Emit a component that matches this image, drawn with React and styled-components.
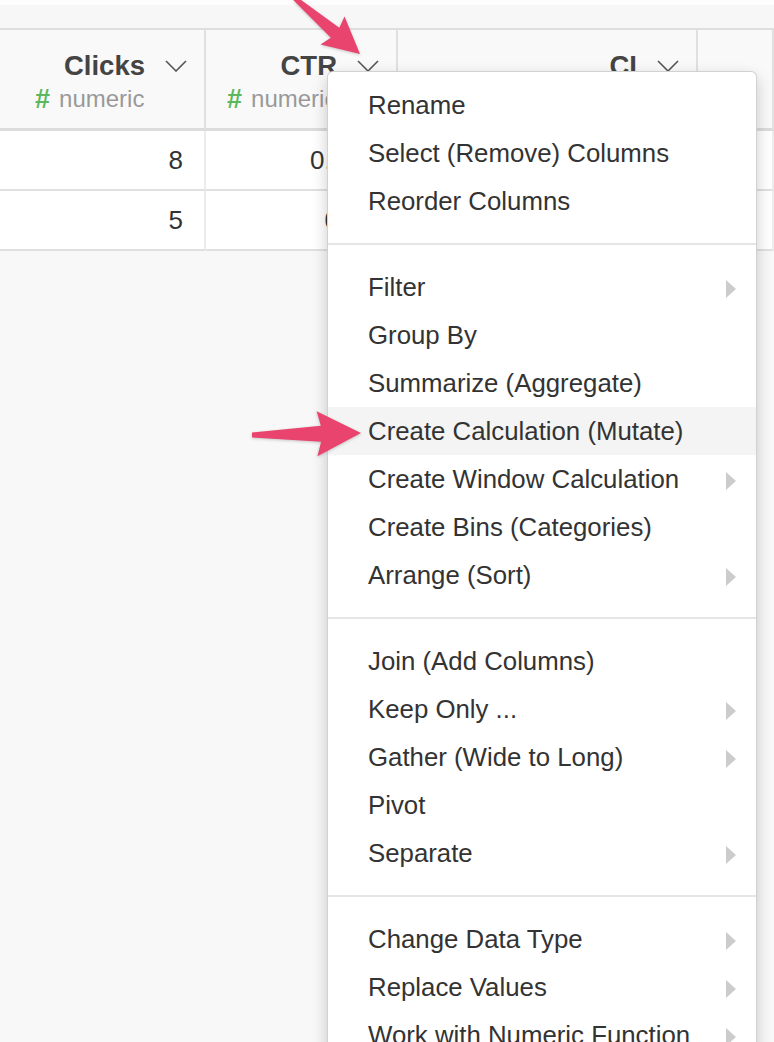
import React from "react";
import styled, { createGlobalStyle } from "styled-components";

const GlobalStyle = createGlobalStyle`
  html, body { margin: 0; padding: 0; background: #f8f8f8; }
  body { font-family: "Liberation Sans", Helvetica, Arial, sans-serif; color: #333; overflow: hidden; }
  * { box-sizing: border-box; }
`;

const Page = styled.div`
  position: relative;
  width: 774px;
  height: 1042px;
  overflow: hidden;
  background: #f8f8f8;
`;

const TopStrip = styled.div`
  height: 30px;
  background: linear-gradient(#fdfdfd 0 5px, #f7f7f7 5px);
  border-bottom: 2px solid #dedede;
`;

const Grid = styled.div`
  display: grid;
  grid-template-columns: 14px 192px 192px 300px 1fr;
`;

const HeadCell = styled.div`
  height: 101px;
  background: #f9f9f9;
  border-right: 2px solid #e0e0e0;
  border-bottom: 3px solid #dcdcdc;
  padding: 21px 17px 0 21px;
  display: flex;
  flex-direction: column;
`;

const TitleRow = styled.div`
  display: flex;
  justify-content: flex-end;
  align-items: center;
  gap: 20px;
  height: 30px;
`;

const Title = styled.span`
  font-size: 27.5px;
  font-weight: bold;
  color: #444;
  line-height: 30px;
  white-space: nowrap;
`;

const TypeRow = styled.div`
  margin-top: 4px;
  display: flex;
  align-items: center;
  height: 28px;
  white-space: nowrap;
  overflow: hidden;
`;

const Hash = styled.span`
  color: #5cb85c;
  font-weight: bold;
  font-size: 27px;
  margin-right: 9px;
`;

const TypeName = styled.span`
  color: #999;
  font-size: 24px;
`;

const DataCell = styled.div`
  height: 60px;
  background: #fff;
  border-right: 2px solid #ececec;
  border-bottom: 2px solid #e0e0e0;
  display: flex;
  align-items: center;
  justify-content: flex-end;
  padding-right: 21px;
  font-size: 26px;
  color: #333;
`;

const Menu = styled.div`
  position: absolute;
  left: 327px;
  top: 71px;
  width: 430px;
  background: #fff;
  border: 1px solid rgba(0, 0, 0, 0.18);
  border-radius: 6px;
  box-shadow: 0 6px 16px rgba(0, 0, 0, 0.2);
  padding-top: 9px;
  z-index: 2;
`;

const Item = styled.div`
  height: 48px;
  display: flex;
  align-items: center;
  justify-content: space-between;
  padding: 0 20px 0 40px;
  font-size: 25.8px;
  color: #333;
  white-space: nowrap;
  background: ${(p) => (p.$active ? "#f4f4f4" : "transparent")};
`;

const Caret = styled.span`
  width: 0;
  height: 0;
  border-left: 10px solid #cccccc;
  border-top: 9.5px solid transparent;
  border-bottom: 9.5px solid transparent;
  margin-top: 3px;
`;

const Divider = styled.div`
  height: 2px;
  background: #e5e5e5;
  margin: 18px 0;
`;

const Overlay = styled.svg`
  position: absolute;
  left: 0;
  top: 0;
  width: 774px;
  height: 1042px;
  pointer-events: none;
  z-index: 3;
  filter: drop-shadow(0 1px 1.5px rgba(0, 0, 0, 0.2));
`;

const Chevron = () => (
  <svg width="22" height="12" viewBox="0 0 22 12">
    <polyline points="1,1 11,11 21,1" fill="none" stroke="#555" strokeWidth="1.6" />
  </svg>
);

const columns = [
  { title: "Clicks", type: "numeric" },
  { title: "CTR", type: "numeric" },
  { title: "CI", type: "numeric" },
];

const rows = [
  ["8", "0.073", "", ""],
  ["5", "0.05", "", ""],
];

const sections = [
  [["Rename"], ["Select (Remove) Columns"], ["Reorder Columns"]],
  [
    ["Filter", true],
    ["Group By"],
    ["Summarize (Aggregate)"],
    ["Create Calculation (Mutate)", false, true],
    ["Create Window Calculation", true],
    ["Create Bins (Categories)"],
    ["Arrange (Sort)", true],
  ],
  [
    ["Join (Add Columns)"],
    ["Keep Only ...", true],
    ["Gather (Wide to Long)", true],
    ["Pivot"],
    ["Separate", true],
  ],
  [
    ["Change Data Type", true],
    ["Replace Values", true],
    ["Work with Numeric Function", true],
  ],
];

const arrowPoints = "0,0 -44,-22.5 -40,-8 -109,-2.5 -109,2.5 -40,8 -44,22.5";

export default function App() {
  return (
    <Page>
      <GlobalStyle />
      <TopStrip />
      <Grid>
        <HeadCell />
        {columns.map((c) => (
          <HeadCell key={c.title}>
            <TitleRow>
              <Title>{c.title}</Title>
              <Chevron />
            </TitleRow>
            <TypeRow>
              <Hash>#</Hash>
              <TypeName>{c.type}</TypeName>
            </TypeRow>
          </HeadCell>
        ))}
        <HeadCell />
        {rows.map((r, i) => (
          <React.Fragment key={i}>
            <DataCell />
            {r.map((v, j) => (
              <DataCell key={j}>{v}</DataCell>
            ))}
          </React.Fragment>
        ))}
      </Grid>
      <Menu>
        {sections.map((sec, si) => (
          <React.Fragment key={si}>
            {si > 0 && <Divider />}
            {sec.map(([label, sub, active]) => (
              <Item key={label} $active={active}>
                <span>{label}</span>
                {sub && <Caret />}
              </Item>
            ))}
          </React.Fragment>
        ))}
      </Menu>
      <Overlay viewBox="0 0 774 1042">
        <g transform="translate(360,54) rotate(40.5) scale(0.82)">
          <polygon points={arrowPoints} fill="#e8446d" />
        </g>
        <g transform="translate(361,433) rotate(-1)">
          <polygon points={arrowPoints} fill="#e8446d" />
        </g>
      </Overlay>
    </Page>
  );
}
